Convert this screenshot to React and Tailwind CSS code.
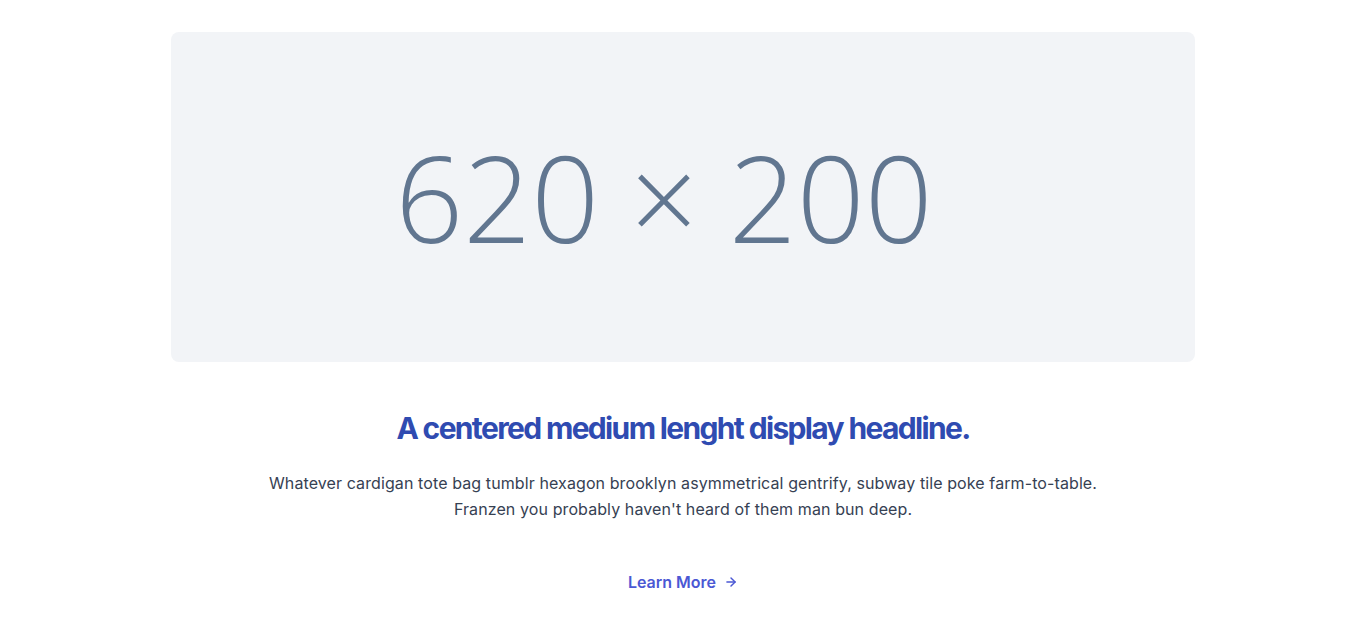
import React from 'react';

const ArrowRight = () => (
  <svg width="14" height="14" viewBox="0 0 24 24" fill="none" stroke="currentColor" strokeWidth="2.5" strokeLinecap="round" strokeLinejoin="round" className="ml-2">
    <path d="M5 12h14" />
    <path d="M12 5l7 7-7 7" />
  </svg>
);

export default function App() {
  return (
    <section className="bg-white min-h-screen font-['Inter',sans-serif]">
      <div className="max-w-5xl mx-auto pt-8 pb-8 flex flex-col items-center text-center">
        {/* placeholder image */}
        <div className="w-full aspect-[620/200] bg-[#f2f4f7] rounded-lg flex items-center justify-center pr-[38px]">
          <span className="font-['Open_Sans',sans-serif] font-light text-[119px] leading-none text-[#617690]">
            620 × 200
          </span>
        </div>

        <h2 className="mt-12 text-3xl font-bold tracking-[-0.055em] text-[#2f4bb1]">
          A centered medium lenght display headline.
        </h2>
        <p className="mt-6 max-w-[860px] text-base leading-relaxed tracking-[0.1px] text-gray-700">
          Whatever cardigan tote bag tumblr hexagon brooklyn asymmetrical gentrify, subway tile poke farm-to-table. Franzen you probably haven't heard of them man bun deep.
        </p>

        <a href="#" className="mt-12 inline-flex items-center font-semibold text-[#4b58d4]">
          Learn More
          <ArrowRight />
        </a>
      </div>
    </section>
  );
}
